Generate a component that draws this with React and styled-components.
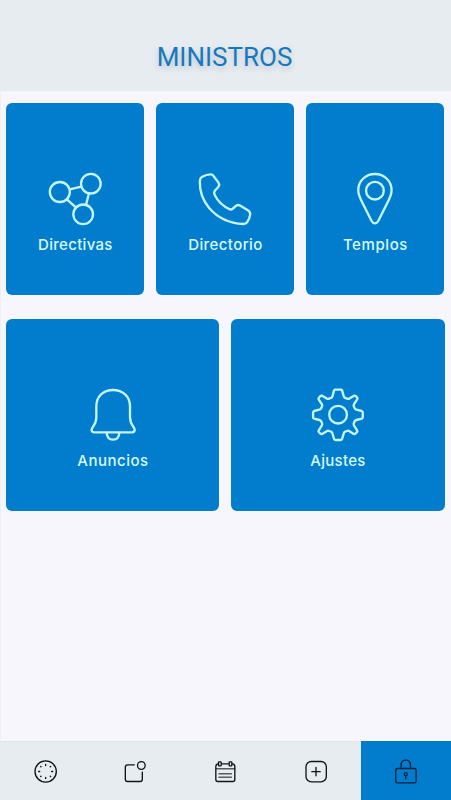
import React from "react";
import styled, { createGlobalStyle } from "styled-components";

const GlobalStyle = createGlobalStyle`
  * {
    box-sizing: border-box;
  }
  body {
    margin: 0;
    background: #f6f6fc;
  }
`;

const Screen = styled.div`
  display: flex;
  flex-direction: column;
  height: 100vh;
  background: #f6f6fc;
`;

const Header = styled.header`
  height: 91px;
  padding: 34px 2px 0 0;
  background: #e7ecf0;
  text-align: center;
  h1 {
    margin: 0;
    font: 400 26px/46px Roboto, sans-serif;
    color: #1679bd;
    text-shadow: 0 3px 6px rgba(0, 40, 80, 0.2);
  }
`;

const Main = styled.main`
  flex: 1;
  padding: 12px 6.5px 12px 6.4px;
  box-shadow: inset 1px 0 #eff0f5;
`;

const TileRow = styled.div`
  display: grid;
  grid-template-columns: repeat(${({ $columns }) => $columns}, 1fr);
  grid-column-gap: 12px;
  margin-bottom: 24px;
`;

const Tile = styled.button`
  display: flex;
  flex-direction: column;
  align-items: center;
  height: 192px;
  padding: 68px 0 0;
  border: 0;
  border-radius: 6px;
  background: #027dcd;
  color: #d8faff;
  svg {
    width: 56px;
    height: 56px;
    fill: none;
    stroke: #c4f6fc;
    stroke-width: 7;
    stroke-linecap: round;
    stroke-linejoin: round;
  }
`;

const Label = styled.span`
  margin-top: 8px;
  font: 500 15px/20px Inter, sans-serif;
  letter-spacing: ${({ $spacing }) => $spacing || "0.3px"};
`;

const TabBar = styled.nav`
  display: grid;
  grid-template-columns: repeat(5, 1fr);
  height: 59px;
  background: #e7ecf0;
`;

const Tab = styled.button`
  display: flex;
  align-items: center;
  justify-content: center;
  padding: 0;
  border: 0;
  border-top: 1px solid ${({ $active }) => ($active ? "#0a76bd" : "#e0e5ea")};
  background: ${({ $active }) => ($active ? "#027dcd" : "transparent")};
  svg {
    width: 28px;
    height: 28px;
    fill: none;
    stroke: ${({ $active }) => ($active ? "#06223d" : "#111416")};
    stroke-width: 4;
    stroke-linecap: round;
    stroke-linejoin: round;
  }
`;

const NetworkIcon = () => (
  <svg viewBox="52.5 33 168 168">
    <circle cx="91" cy="96" r="30" />
    <circle cx="184" cy="71" r="29.5" />
    <circle cx="161" cy="163" r="29.5" />
    <path d="M121 88l34-8M112 118l27 24M178 101l-8 32" />
  </svg>
);

const PhoneIcon = () => (
  <svg viewBox="52.5 33 168 168">
    <path d="M67 51Q80 43 94 43Q99 43 102 48L117 68Q121 74 117 80L106 92Q102 98 106 106C116 126 133 140 151 148Q157 150 162 144L170 137Q176 133 183 137L205 151Q213 156 212 164Q210 178 203 187Q199 192 191 192C150 190 114 173 89 144C68 119 60 94 61 63Q61 55 67 51Z" />
  </svg>
);

const PinIcon = () => (
  <svg viewBox="68.25 33 168 168">
    <circle cx="152" cy="92" r="26.5" />
    <path d="M152 42C123 42 102 64 102 91C102 106 109 118 116 131L142 183Q146 190 152 190Q158 190 162 183L188 131C195 118 202 106 202 91C202 64 181 42 152 42Z" />
  </svg>
);

const BellIcon = () => (
  <svg viewBox="75 21 168 168">
    <path d="M102 157Q94 156 95 149Q95 145 99 140C107 130 109 124 109 112V79C109 49 130 30 159 30C188 30 210 49 210 79V112C210 124 212 130 220 140Q224 145 224 149Q224 156 216 157Z" />
    <path d="M140 159C141 172 149 179 159 179C169 179 177 172 178 159" />
  </svg>
);

const GearIcon = () => (
  <svg viewBox="60.75 21 168 168">
    <circle cx="145" cy="104" r="26.5" />
    <path d="M133 31Q134 29 137 29H153Q156 29 157 31L162 49Q163 53 167 54L172 56Q176 58 180 55L193 47Q196 46 198 48L203 54Q204 56 202 59L193 72Q191 75 192 79L195 85Q196 88 200 89L216 93Q219 94 219 97V112Q219 115 216 116L200 120Q196 121 195 124L192 130Q191 134 193 137L202 151Q204 154 202 156L197 161Q195 163 192 162L178 153Q175 151 172 153L166 155Q163 156 162 160L157 177Q156 180 153 180H137Q134 180 133 177L128 160Q127 156 124 155L118 153Q115 151 112 153L97 162Q94 163 92 161L87 156Q85 154 87 151L96 137Q98 134 97 130L94 124Q93 121 89 120L73 116Q70 115 70 112V97Q70 94 73 93L89 89Q93 88 94 85L97 79Q98 75 96 72L87 59Q85 56 87 54L92 48Q94 46 97 47L110 55Q114 58 118 56L123 54Q127 53 128 49Z" />
  </svg>
);

const ClockIcon = () => (
  <svg viewBox="93 64.5 84 84">
    <circle cx="137" cy="108" r="32" />
    <path d="M137 87v3M137 126v3M116 108h3M155 108h3M122 93l1 1M151 122l1 1M152 93l-1 1M123 122l-1 1" />
  </svg>
);

const NoticeIcon = () => (
  <svg viewBox="364 64.5 84 84">
    <path d="M404 88H384Q377 88 377 95V131Q377 138 384 138H421Q428 138 428 131V110" />
    <circle cx="425" cy="90" r="11.5" />
  </svg>
);

const CalendarIcon = () => (
  <svg viewBox="64.5 64.5 84 84">
    <path d="M86 85Q79 86 79 93V132Q79 138 85 138H130Q136 138 136 132V93Q136 86 129 85M97 85H117" />
    <path d="M80 100H136M88 115H126M88 125H126" strokeWidth="3" />
    <rect x="87" y="79" width="8" height="12" rx="1.5" />
    <rect x="119" y="79" width="8" height="12" rx="1.5" />
  </svg>
);

const AddIcon = () => (
  <svg viewBox="335 64.5 84 84">
    <rect x="347" y="78" width="61" height="61" rx="16" />
    <path d="M377 96v25M364.5 108.5h25" />
  </svg>
);

const LockIcon = () => (
  <svg viewBox="140.7 79.5 84 84">
    <rect x="152" y="114" width="61" height="43" rx="5" />
    <path d="M168 114V103C168 94 174 89 182 89C190 89 196 94 196 103V114" />
    <circle cx="182" cy="131" r="4.5" />
    <path d="M182 136v9" />
  </svg>
);

const App = () => {
  return (
    <Screen>
      <GlobalStyle />
      <Header>
        <h1>MINISTROS</h1>
      </Header>
      <Main>
        <TileRow $columns={3}>
          <Tile>
            <NetworkIcon />
            <Label>Directivas</Label>
          </Tile>
          <Tile>
            <PhoneIcon />
            <Label $spacing="0.4px">Directorio</Label>
          </Tile>
          <Tile>
            <PinIcon />
            <Label $spacing="0.6px">Templos</Label>
          </Tile>
        </TileRow>
        <TileRow $columns={2}>
          <Tile>
            <BellIcon />
            <Label $spacing="0.5px">Anuncios</Label>
          </Tile>
          <Tile>
            <GearIcon />
            <Label>Ajustes</Label>
          </Tile>
        </TileRow>
      </Main>
      <TabBar>
        <Tab>
          <ClockIcon />
        </Tab>
        <Tab>
          <NoticeIcon />
        </Tab>
        <Tab>
          <CalendarIcon />
        </Tab>
        <Tab>
          <AddIcon />
        </Tab>
        <Tab $active>
          <LockIcon />
        </Tab>
      </TabBar>
    </Screen>
  );
};
export default App;
